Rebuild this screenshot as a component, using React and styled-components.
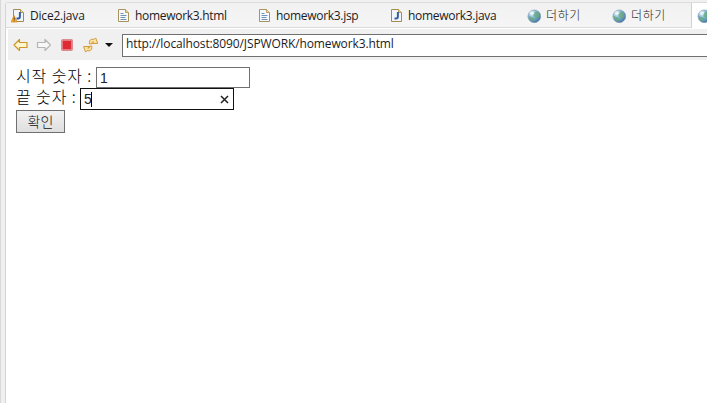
import React from "react";
import styled, { createGlobalStyle } from "styled-components";

const GlobalStyle = createGlobalStyle`
  * { box-sizing: border-box; }
  body { margin: 0; overflow: hidden; background: #fff; }
`;

const Window = styled.div`
  display: flex;
  width: 707px;
  height: 403px;
  overflow: hidden;
  background: #f0f0f0;
  color: #1c1c1c;
  font-family: "Open Sans", "Noto Sans CJK KR", sans-serif;
  font-size: 12px;
`;

const Sash = styled.div`
  flex: none;
  width: 5px;
  border-left: 1px solid #d9d9d9;
  background: #f0f0f0;
`;

const Editor = styled.div`
  display: flex;
  flex-direction: column;
  flex: 1;
  min-width: 0;
  margin-top: 2px;
  border-left: 1px solid #d5d5d5;
  border-top: 1px solid #dcdcdc;
  border-top-left-radius: 3px;
  background: #fff;
`;

const TabBar = styled.div`
  display: flex;
  flex: none;
  height: 25px;
`;

const Tab = styled.div`
  display: flex;
  flex: none;
  align-items: center;
  gap: ${(p) => p.$gap || 4}px;
  width: ${(p) => p.$width}px;
  padding-top: 1px;
  padding-left: ${(p) => p.$pad || 5}px;
  border-bottom: 1px solid ${(p) => (p.$active ? "#fff" : "#dadada")};
  border-right: ${(p) => (p.$last ? "1px solid #d0d0d0" : "0")};
  background: ${(p) => (p.$active ? "#fff" : "linear-gradient(#f1f1f1, #f5f5f5)")};
  white-space: nowrap;
  overflow: hidden;
  svg { flex: none; }
`;

const TabLabel = styled.span`
  line-height: 18px;
  font-weight: ${(p) => (p.$korean ? 300 : 400)};
  letter-spacing: ${(p) => (p.$korean ? 0.6 : p.$spacing ?? -0.3)}px;
`;

const Toolbar = styled.div`
  display: flex;
  align-items: center;
  flex: none;
  height: 31px;
  margin: 1px 0 0 2px;
  padding-left: 5px;
  background: #f0f0f0;
  svg { flex: none; }
`;

const ToolIcon = styled.span`
  display: flex;
  flex: none;
  width: ${(p) => p.$width}px;
`;

const AddressBar = styled.div`
  flex: 1;
  height: 23px;
  margin-top: 1px;
  padding-left: 3px;
  border: 1px solid #707070;
  border-right: 0;
  background: #fff;
  line-height: 18px;
  letter-spacing: -0.12px;
  white-space: nowrap;
`;

const Page = styled.form`
  flex: 1;
  padding: 7px 0 0 10px;
  color: #000;
`;

const Field = styled.label`
  display: flex;
  height: ${(p) => p.$height}px;
  white-space: nowrap;
`;

const FieldLabel = styled.span`
  width: ${(p) => p.$width}px;
  font-family: "Noto Sans CJK KR", sans-serif;
  font-weight: 300;
  font-size: 16px;
  line-height: 16px;
  letter-spacing: 0.9px;
`;

const InputFrame = styled.span`
  display: flex;
  align-items: center;
  width: 154px;
  height: ${(p) => (p.$focused ? 22 : 21)}px;
  padding: 0 4px 0 3px;
  border: 1px solid ${(p) => (p.$focused ? "#111" : "#707070")};
  font-family: "Liberation Sans", Arial, sans-serif;
  font-size: 14px;
  line-height: 18px;
  color: #222;
`;

const Caret = styled.span`
  width: 1px;
  height: 15px;
  margin-left: -1px;
  margin-right: auto;
  background: #000;
`;

const SubmitButton = styled.button`
  display: block;
  width: 49px;
  height: 23px;
  padding: 0 0 2px;
  border: 1px solid #707070;
  background: linear-gradient(#f1f1f1, #dfdfdf);
  color: #111;
  font-family: "Noto Sans CJK KR", sans-serif;
  font-size: 14px;
  font-weight: 300;
  line-height: 18px;
`;

function JavaIcon({ warning }) {
  return (
    <svg width="15" height="15" viewBox="-1 0 15 15">
      <path d="M1.5 1.5h7l3 3v9h-10z" fill="#f1f6fc" stroke="#a58a4a" />
      <path d="M8.5 1.5v3h3" fill="#e8d6a0" stroke="#b99a55" />
      <path d="M7.9 4v4.5q0 2-1.8 2H4.5" fill="none" stroke="#3b5d9c" strokeWidth="2" />
      {warning && (
        <>
          <path d="M2 7.5L5.2 14H-.8z" fill="#f7b044" stroke="#d98a1c" strokeWidth=".8" />
          <path d="M2.2 9.6v2M2.2 12.3v1" stroke="#553300" />
        </>
      )}
    </svg>
  );
}

function FileIcon() {
  return (
    <svg width="13" height="15" viewBox="0 0 13 15">
      <path d="M.5 1.5h7l3 3v9h-10z" fill="#f7fafc" stroke="#a6935f" />
      <path d="M7.5 1.5v3h3" fill="#ead9a7" stroke="#bca060" />
      <path d="M2.5 5.5h3M2.5 7.5h6M2.5 9.5h5M2.5 11.5h6" stroke="#7290b8" />
    </svg>
  );
}

function GlobeIcon() {
  return (
    <svg width="14" height="14" viewBox="0 0 14 14">
      <defs>
        <radialGradient id="sea" cx="32%" cy="28%" r="80%">
          <stop offset="0" stopColor="#e2f2f8" />
          <stop offset=".45" stopColor="#83b4d5" />
          <stop offset="1" stopColor="#416f9f" />
        </radialGradient>
      </defs>
      <circle cx="7.3" cy="7.3" r="6.4" fill="url(#sea)" stroke="#7795ad" strokeWidth=".5" />
      <path d="M6.5 4l2.5-1.5 2.7 1.6.6 3.2-1.8 2.4-2.5-1.4-1.5-1zM2 7l2.3 1 2.5.7.7 2-1.5 1.8-2.2-1.1L2 9z" fill="#65a878" opacity=".75" />
      <ellipse cx="5" cy="4" rx="2.5" ry="1.7" fill="#fff" opacity=".55" />
    </svg>
  );
}

function ArrowIcon({ forward }) {
  return (
    <svg width="16" height="14" viewBox="0 0 16 14">
      <path
        d={forward ? "M14.5 7L9 1.5v3H1.5v5H9v3z" : "M1 7l5.5-5.5v3H14v5H6.5v3z"}
        fill={forward ? "#f7f7f7" : "#fff6cf"}
        stroke={forward ? "#b5b5b5" : "#c9972b"}
        strokeWidth="1.2"
        strokeLinejoin="round"
      />
    </svg>
  );
}

function StopIcon() {
  return (
    <svg width="12" height="12" viewBox="0 0 12 12">
      <rect x=".5" y=".5" width="11" height="11" rx="1" fill="#e87b80" stroke="#da8d8f" />
      <rect x="2" y="2" width="8" height="8" fill="#dc2b35" />
    </svg>
  );
}

function RefreshIcon() {
  return (
    <svg width="16" height="16" viewBox="0 0 16 16">
      <g fill="#fbe5a5" stroke="#d29a3c" strokeLinejoin="round">
        <path d="M6.6 7Q5.6 3 8.9 2.2l2.2.2L12.6.9l2.2 5.5-5.4.2 1.1-1.8q-1.9-.2-1.7 2z" />
        <path d="M8.6 9q1 4-2.3 4.8l-2.2-.2-1.5 1.5L.6 9.6l5.4-.2-1.1 1.8q1.9.2 1.7-2z" />
      </g>
    </svg>
  );
}

function App() {
  return (
    <>
      <GlobalStyle />
      <Window>
        <Sash />
        <Editor>
          <TabBar>
            <Tab $width={107}><JavaIcon warning /><TabLabel $spacing={-0.2}>Dice2.java</TabLabel></Tab>
            <Tab $width={141}><FileIcon /><TabLabel>homework3.html</TabLabel></Tab>
            <Tab $width={130}><FileIcon /><TabLabel>homework3.jsp</TabLabel></Tab>
            <Tab $width={138}><JavaIcon /><TabLabel>homework3.java</TabLabel></Tab>
            <Tab $width={85} $gap={5}><GlobeIcon /><TabLabel $korean>더하기</TabLabel></Tab>
            <Tab $width={85} $gap={5} $last><GlobeIcon /><TabLabel $korean>더하기</TabLabel></Tab>
            <Tab $width={20} $active><GlobeIcon /></Tab>
          </TabBar>
          <Toolbar>
            <ToolIcon $width={23}><ArrowIcon /></ToolIcon>
            <ToolIcon $width={25}><ArrowIcon forward /></ToolIcon>
            <ToolIcon $width={22}><StopIcon /></ToolIcon>
            <ToolIcon $width={22}><RefreshIcon /></ToolIcon>
            <ToolIcon $width={17}>
              <svg width="8" height="4" viewBox="0 0 8 4"><path d="M0 0h8L4 4z" fill="#111" /></svg>
            </ToolIcon>
            <AddressBar>http://localhost:8090/JSPWORK/homework3.html</AddressBar>
          </Toolbar>
          <Page>
            <Field $height={21}>
              <FieldLabel $width={80}>시작 숫자 :</FieldLabel>
              <InputFrame>1</InputFrame>
            </Field>
            <Field $height={22}>
              <FieldLabel $width={64}>끝 숫자 :</FieldLabel>
              <InputFrame $focused>
                5<Caret />
                <svg width="9" height="9" viewBox="0 0 9 9"><path d="M1 1l7 7M8 1L1 8" stroke="#222" strokeWidth="1.5" /></svg>
              </InputFrame>
            </Field>
            <SubmitButton type="button">확인</SubmitButton>
          </Page>
        </Editor>
      </Window>
    </>
  );
}

export default App;
